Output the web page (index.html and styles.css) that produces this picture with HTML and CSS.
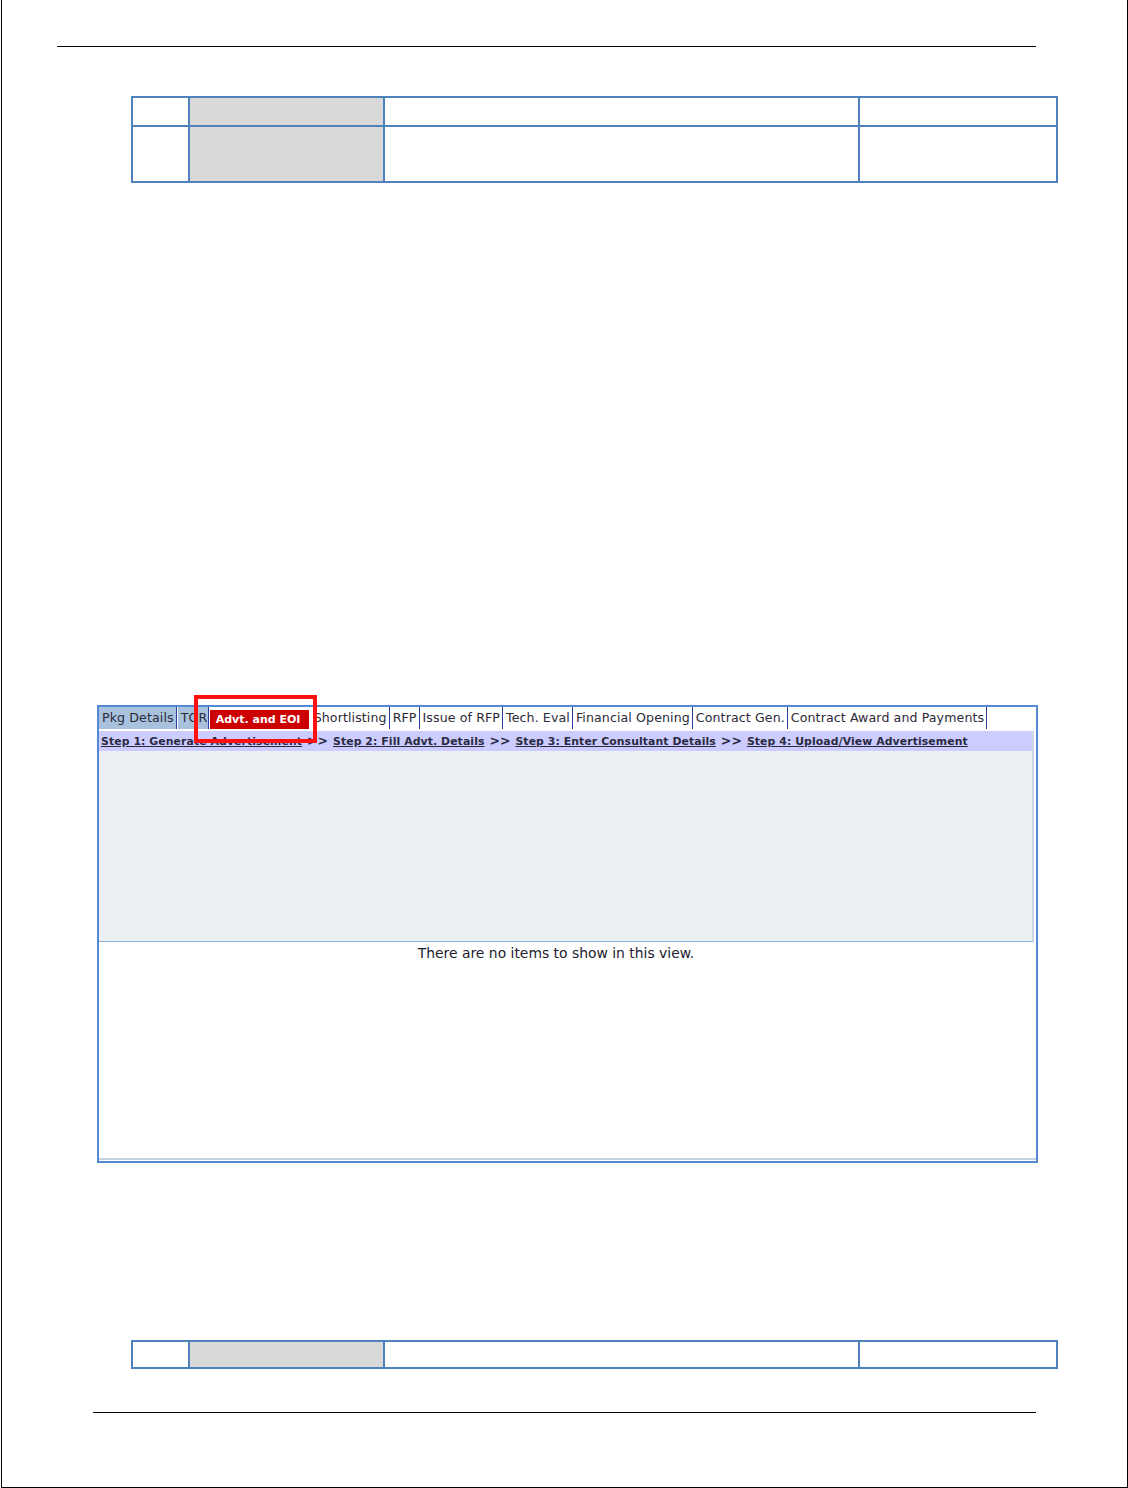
FILE: index.html
```html
<!DOCTYPE html>
<html>
<head>
<meta charset="utf-8">
<link rel="stylesheet" href="styles.css">
</head>
<body>
<div class="page">
  <div class="rule rule-top"></div>

  <table class="doc-table top-table">
    <colgroup><col class="c1"><col class="c2"><col class="c3"><col class="c4"></colgroup>
    <tr class="r-short"><td></td><td class="gray"></td><td></td><td></td></tr>
    <tr class="r-tall"><td></td><td class="gray"></td><td></td><td></td></tr>
  </table>

  <div class="shot">
    <div class="tabs">
      <span class="tab tab-blue">Pkg Details</span>
      <span class="tab tab-blue tab-tor">TOR</span>
      <span class="tab tab-active">Advt. and EOI</span>
      <span class="tab">Shortlisting</span>
      <span class="tab">RFP</span>
      <span class="tab">Issue of RFP</span>
      <span class="tab">Tech. Eval</span>
      <span class="tab">Financial Opening</span>
      <span class="tab">Contract Gen.</span>
      <span class="tab">Contract Award and Payments</span>
      <div class="highlight"></div>
    </div>
    <div class="panel">
      <div class="steps">
        <a class="step">Step 1: Generate Advertisement</a>
        <span class="sep">&gt;&gt;</span>
        <a class="step">Step 2: Fill Advt. Details</a>
        <span class="sep">&gt;&gt;</span>
        <a class="step">Step 3: Enter Consultant Details</a>
        <span class="sep">&gt;&gt;</span>
        <a class="step">Step 4: Upload/View Advertisement</a>
      </div>
    </div>
    <div class="empty">There are no items to show in this view.</div>
  </div>

  <table class="doc-table bottom-table">
    <colgroup><col class="c1"><col class="c2"><col class="c3"><col class="c4"></colgroup>
    <tr class="r-bottom"><td></td><td class="gray"></td><td></td><td></td></tr>
  </table>

  <div class="rule rule-bottom"></div>
</div>
</body>
</html>
```

FILE: styles.css
```css
html, body {
  margin: 0;
  padding: 0;
  background: #ffffff;
}

.page {
  box-sizing: border-box;
  height: 1488px;
  margin-left: 1px;
  width: 1127px;
  border-left: 1px solid #000;
  border-right: 1px solid #000;
  border-bottom: 1px solid #000;
  padding-top: 46px;
  font-family: "DejaVu Sans", Verdana, sans-serif;
  display: flow-root;
}

.rule {
  height: 1px;
  background: #000;
}

.rule-top {
  margin-left: 55px;
  width: 979px;
}

.rule-bottom {
  margin-top: 43px;
  margin-left: 91px;
  width: 943px;
}

.doc-table {
  border-collapse: collapse;
  table-layout: fixed;
  width: 927px;
  margin-left: 129px;
}

.doc-table td {
  border: 2px solid #4f81bd;
  padding: 0;
}

.doc-table td.gray {
  background: #d9d9d9;
}

.c1 { width: 57px; }
.c2 { width: 195px; }
.c3 { width: 475px; }
.c4 { width: 198px; }

.top-table { margin-top: 49px; }
.r-short td { height: 27px; }
.r-tall td { height: 54px; }

.bottom-table { margin-top: 177px; }
.r-bottom td { height: 25px; }

/* embedded screenshot */
.shot {
  box-sizing: border-box;
  margin-top: 522px;
  margin-left: 95px;
  width: 941px;
  height: 458px;
  border: 2px solid #5489d3;
  position: relative;
  font-size: 12.6px;
  color: #222;
  display: flex;
  flex-direction: column;
}

.tabs {
  display: flex;
  align-items: flex-end;
  height: 22px;
  position: relative;
}

.tab {
  display: block;
  height: 22px;
  line-height: 21px;
  padding: 0 2px 0 3px;
  border-right: 1px solid #2a3c9e;
  box-sizing: border-box;
  white-space: nowrap;
  letter-spacing: 0.1px;
  color: #2b2b3a;
}

.tab-blue {
  background: #a8c1dc;
  margin-right: 1px;
}

.tab-tor {
  width: 31px;
  overflow: hidden;
}

.tab-active {
  background: #cc0000;
  color: #fff;
  font-weight: bold;
  font-size: 11px;
  height: 19px;
  line-height: 19px;
  padding: 0 0 0 6px;
  margin: 0 2px 0 0;
  border-right: none;
  width: 99px;
  letter-spacing: 0;
}

.highlight {
  position: absolute;
  left: 95px;
  top: -12px;
  width: 123px;
  height: 48px;
  border: 4px solid #ff1010;
  box-sizing: border-box;
}

.panel {
  margin-top: 2px;
  height: 211px;
  width: 935px;
  background: #eceff3;
  border-right: 2px solid #cdd8e6;
  border-bottom: 1px solid #8fb0d9;
  box-sizing: border-box;
}

.steps {
  background: #ccccff;
  height: 20px;
  width: 933px;
  line-height: 20px;
  padding-left: 2px;
  font-size: 10.85px;
  font-weight: bold;
  letter-spacing: 0.1px;
  color: #2a2a40;
  white-space: nowrap;
  box-sizing: border-box;
}

.step {
  text-decoration: underline;
  color: #2a2a40;
}

.sep {
  font-size: 12.5px;
  margin: 0 1px;
}

.empty {
  flex: 1;
  text-align: center;
  padding-top: 3px;
  padding-right: 23px;
  font-size: 13.9px;
  color: #221a30;
  border-bottom: 2px solid #c5d3e2;
  margin-bottom: 1px;
  box-sizing: border-box;
}
```
